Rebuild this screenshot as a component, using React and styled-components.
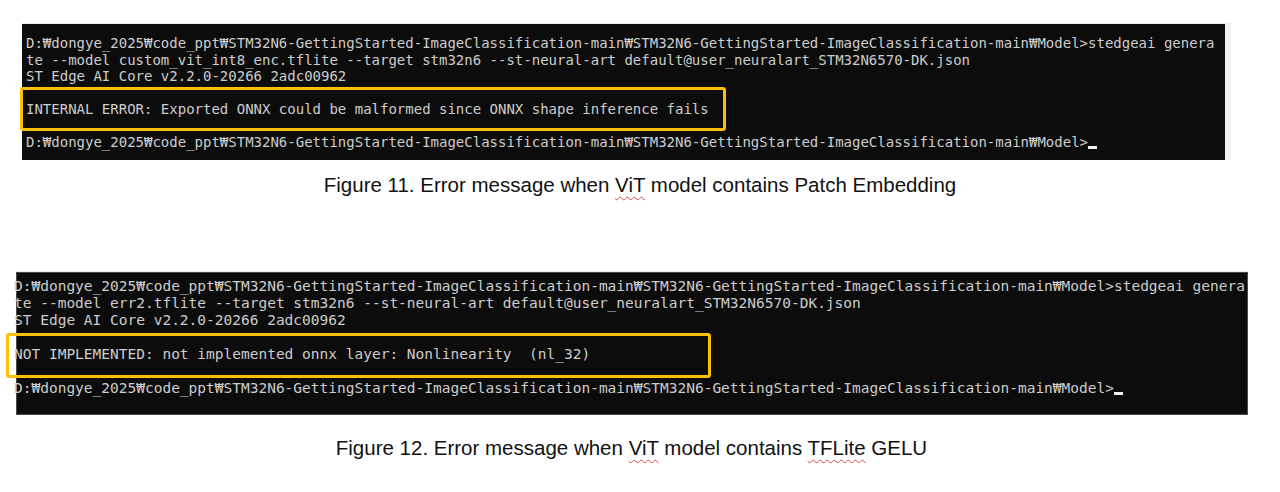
import React from "react";
import styled, { createGlobalStyle } from "styled-components";

const GlobalStyle = createGlobalStyle`
  html, body { margin: 0; padding: 0; background: #ffffff; }
  body { width: 1280px; height: 492px; overflow: hidden; }
`;

const Page = styled.div`
  display: flex;
  flex-direction: column;
  padding-top: 23px;
`;

const Figure = styled.figure`
  margin: 0;
  margin-top: ${(p) => p.$top || 0}px;
  display: flex;
  flex-direction: column;
`;

const Shot = styled.div`
  margin-left: ${(p) => p.$left}px;
  width: ${(p) => p.$width}px;
  border-top: 1px solid #ececec;
  border-right: ${(p) => p.$frameRight || 0}px solid #f0f0f0;
`;

const Terminal = styled.div`
  background: #0c0c0c;
  box-sizing: border-box;
  height: ${(p) => p.$height}px;
  padding: ${(p) => p.$padTop}px 0 0 ${(p) => p.$padLeft}px;
  border: ${(p) => (p.$bordered ? "1px solid #4a4a4a" : "none")};
  font-family: "DejaVu Sans Mono", "Liberation Mono", monospace;
  font-size: ${(p) => p.$fontSize}px;
  line-height: ${(p) => p.$lineHeight}px;
  color: #cdcdcd;
  overflow: visible;
  display: flex;
  flex-direction: column;
`;

const Line = styled.div`
  position: relative;
  white-space: pre;
  height: ${(p) => p.$lh}px;
  margin-left: ${(p) => p.$shift || 0}px;
`;

const Highlight = styled.span`
  position: absolute;
  left: ${(p) => p.$left}px;
  top: ${(p) => p.$top}px;
  width: ${(p) => p.$width}px;
  height: ${(p) => p.$height}px;
  box-sizing: border-box;
  border: 3px solid #ffc000;
  border-radius: 3px;
  pointer-events: none;
`;

const Cursor = styled.span`
  display: inline-block;
  width: 9px;
  height: 3px;
  background: #f2f2f2;
  vertical-align: -2px;
`;

const Caption = styled.figcaption`
  margin-top: ${(p) => p.$top}px;
  padding-right: ${(p) => p.$shiftLeft || 0}px;
  text-align: center;
  font-family: "Liberation Sans", Arial, sans-serif;
  font-size: 20.5px;
  line-height: 24px;
  color: #111111;
`;

const Spell = styled.span`
  text-decoration: underline wavy #e04848;
  text-decoration-thickness: 1px;
  text-underline-offset: 4px;
  text-decoration-skip-ink: none;
`;

const PATH =
  "D:₩dongye_2025₩code_ppt₩STM32N6-GettingStarted-ImageClassification-main₩STM32N6-GettingStarted-ImageClassification-main₩Model>";

function Console({ cfg, line2, error, hl }) {
  const lh = cfg.lineHeight;
  return (
    <Terminal
      $height={cfg.height}
      $padTop={cfg.padTop}
      $padLeft={cfg.padLeft}
      $fontSize={cfg.fontSize}
      $lineHeight={lh}
      $bordered={cfg.bordered}
    >
      <Line $lh={lh} $shift={cfg.shift}>{PATH + "stedgeai genera"}</Line>
      <Line $lh={lh} $shift={cfg.shift}>{line2}</Line>
      <Line $lh={lh} $shift={cfg.shift}>ST Edge AI Core v2.2.0-20266 2adc00962</Line>
      <Line $lh={lh} />
      <Line $lh={lh} $shift={cfg.shift}>
        {error}
        <Highlight $left={hl.left} $top={hl.top} $width={hl.width} $height={hl.height} />
      </Line>
      <Line $lh={lh} />
      <Line $lh={lh} $shift={cfg.shift}>
        {PATH}
        <Cursor />
      </Line>
    </Terminal>
  );
}

export default function App() {
  return (
    <>
      <GlobalStyle />
      <Page>
        <Figure>
          <Shot $left={22} $width={1203} $frameRight={6}>
            <Console
              cfg={{
                height: 136,
                padTop: 11,
                padLeft: 4,
                fontSize: 14,
                lineHeight: 16.5,
                bordered: false,
                shift: 0,
              }}
              line2="te --model custom_vit_int8_enc.tflite --target stm32n6 --st-neural-art default@user_neuralart_STM32N6570-DK.json"
              error="INTERNAL ERROR: Exported ONNX could be malformed since ONNX shape inference fails"
              hl={{ left: -6, top: -14, width: 706, height: 44 }}
            />
          </Shot>
          <Caption $top={13}>
            Figure 11. Error message when <Spell>ViT</Spell> model contains Patch Embedding
          </Caption>
        </Figure>

        <Figure $top={74}>
          <Shot $left={16} $width={1232}>
            <Console
              cfg={{
                height: 143,
                padTop: 5,
                padLeft: 0,
                fontSize: 14.5,
                lineHeight: 17,
                bordered: true,
                shift: -3,
              }}
              line2="te --model err2.tflite --target stm32n6 --st-neural-art default@user_neuralart_STM32N6570-DK.json"
              error="NOT IMPLEMENTED: not implemented onnx layer: Nonlinearity  (nl_32)"
              hl={{ left: -8, top: -13, width: 705, height: 45 }}
            />
          </Shot>
          <Caption $top={21} $shiftLeft={17}>
            Figure 12. Error message when <Spell>ViT</Spell> model contains <Spell>TFLite</Spell> GELU
          </Caption>
        </Figure>
      </Page>
    </>
  );
}
